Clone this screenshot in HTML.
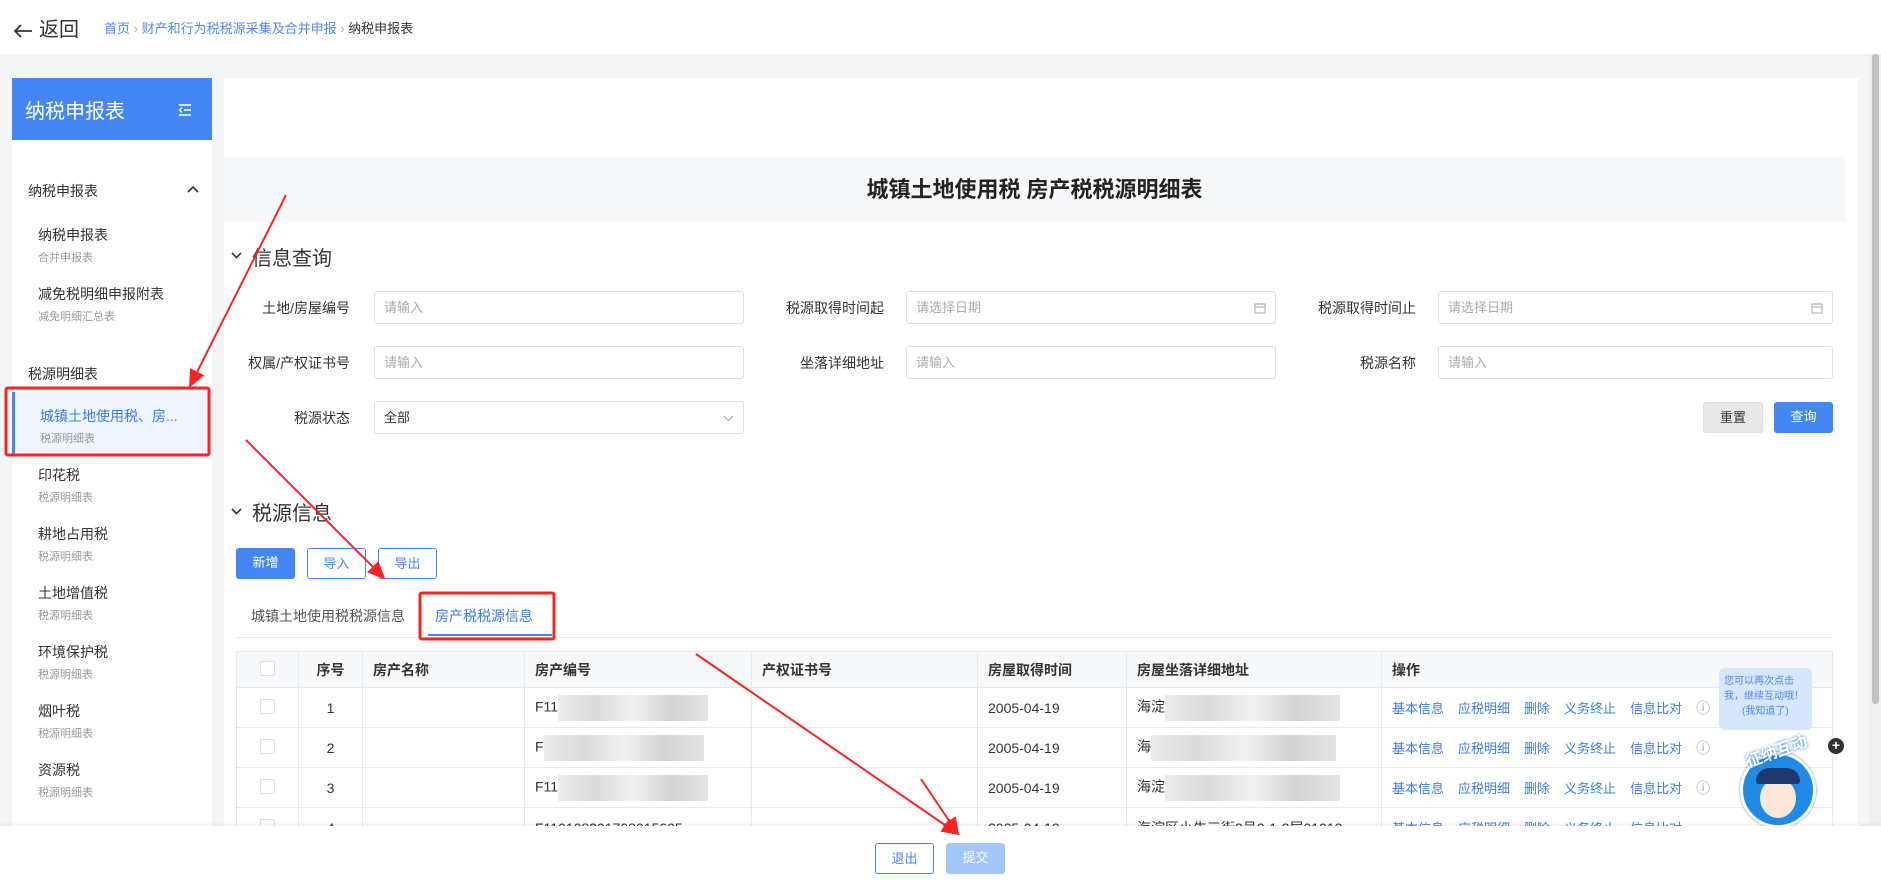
<!DOCTYPE html>
<html><head><meta charset="utf-8"><style>
*{margin:0;padding:0;box-sizing:border-box}
body{width:1881px;height:885px;overflow:hidden;background:#f4f5f7;font-family:"Liberation Sans","Noto Sans CJK SC",sans-serif;color:#333;position:relative;font-size:14px}
.a{position:absolute;white-space:nowrap}
.top{left:0;top:0;width:1881px;height:54px;background:#fff}
.inp{position:absolute;height:33px;border:1px solid #dcdfe6;border-radius:3px;background:#fff;color:#aaa;font-size:13px;padding:0 9px;line-height:31px}
.inp svg{float:right;margin-top:10px}
.lbl{position:absolute;text-align:right;font-size:14px;color:#333;width:150px}
.btn{position:absolute;height:31px;border-radius:3px;font-size:13px;text-align:center;line-height:29px}
.side .t{position:absolute;left:37px;font-size:14px;color:#333}
.side .s{position:absolute;left:37px;font-size:11px;color:#999}
table{border-collapse:collapse;position:absolute;left:236px;top:651px;width:1597px;font-size:14px}
td,th{border:1px solid #e6e8eb;height:40px;padding:0 10px;text-align:left;font-weight:bold;color:#333}
th{height:36px;background:#f7f8fa}
td{font-weight:normal}
.cb{display:inline-block;width:15px;height:15px;border:1px solid #dcdfe6;border-radius:2px;background:#fff}
.op{color:#3a7bea;font-size:13px;margin-right:14px}
.blur{display:inline-block;width:150px;height:26px;background:linear-gradient(90deg,#e6e6e6,#d0d0d0,#eee,#c8c8c8,#ddd);vertical-align:middle;opacity:.8}
</style></head><body>
<div class="a top"></div>
<div class="a" style="left:13px;top:13px;font-size:20px;color:#333"><svg width="20" height="14" viewBox="0 0 20 14" style="vertical-align:middle;margin-right:6px"><path d="M19 7H2M8 1L2 7l6 6" stroke="#333" stroke-width="1.8" fill="none"/></svg>返回</div>
<div class="a" style="left:104px;top:18px;font-size:13px;color:#4a8af4">首页 <span style="color:#aaa">›</span> 财产和行为税税源采集及合并申报 <span style="color:#aaa">›</span> <span style="color:#333">纳税申报表</span></div>

<div class="a side" style="left:12px;top:78px;width:200px;height:760px;background:#fff">
 <div class="a" style="left:0;top:0;width:200px;height:62px;background:#4486f4;color:#fff;font-size:20px;padding:17px 13px">纳税申报表<svg width="14" height="12" viewBox="0 0 14 12" style="position:absolute;right:20px;top:26px"><path d="M1 1h12M6 6h7M1 11h12M4 3.5L1.5 6 4 8.5" stroke="#fff" stroke-width="1.5" fill="none"/></svg></div>
 <div class="a" style="left:16px;top:103px;font-size:14px">纳税申报表</div>
 <svg class="a" style="left:175px;top:107px" width="12" height="8" viewBox="0 0 12 8"><path d="M1 7l5-5 5 5" stroke="#333" stroke-width="1.6" fill="none"/></svg>
 <div class="t" style="left:26px;top:147px">纳税申报表</div><div class="s" style="left:26px;top:171px">合并申报表</div>
 <div class="t" style="left:26px;top:206px">减免税明细申报附表</div><div class="s" style="left:26px;top:230px">减免明细汇总表</div>
 <div class="a" style="left:16px;top:286px;font-size:14px">税源明细表</div>
 <div class="a" style="left:0;top:314px;width:200px;height:63px;background:#eef5ff;border-left:3px solid #4486f4"></div>
 <div class="t" style="left:28px;top:328px;color:#3a7bea">城镇土地使用税、房...</div><div class="s" style="left:28px;top:352px">税源明细表</div>
 <div class="t" style="left:26px;top:387px">印花税</div><div class="s" style="left:26px;top:411px">税源明细表</div>
 <div class="t" style="left:26px;top:446px">耕地占用税</div><div class="s" style="left:26px;top:470px">税源明细表</div>
 <div class="t" style="left:26px;top:505px">土地增值税</div><div class="s" style="left:26px;top:529px">税源明细表</div>
 <div class="t" style="left:26px;top:564px">环境保护税</div><div class="s" style="left:26px;top:588px">税源明细表</div>
 <div class="t" style="left:26px;top:623px">烟叶税</div><div class="s" style="left:26px;top:647px">税源明细表</div>
 <div class="t" style="left:26px;top:682px">资源税</div><div class="s" style="left:26px;top:706px">税源明细表</div>
</div>

<div class="a" style="left:224px;top:78px;width:1634px;height:760px;background:#fff"></div>
<div class="a" style="left:224px;top:157px;width:1621px;height:65px;background:#f7f8fa;text-align:center;font-size:22px;font-weight:bold;line-height:65px;color:#222">城镇土地使用税 房产税税源明细表</div>
<svg class="a" style="left:231px;top:252px" width="11" height="7" viewBox="0 0 11 7"><path d="M1 1l4.5 4.5L10 1" stroke="#333" stroke-width="1.6" fill="none"/></svg>
<div class="a" style="left:252px;top:242px;font-size:20px;color:#333">信息查询</div>

<div class="lbl" style="left:200px;top:298px">土地/房屋编号</div><div class="inp" style="left:374px;top:291px;width:370px">请输入</div>
<div class="lbl" style="left:734px;top:298px">税源取得时间起</div><div class="inp" style="left:906px;top:291px;width:370px">请选择日期<svg width="12" height="12" viewBox="0 0 12 12"><rect x="1" y="2" width="10" height="9" stroke="#aaa" fill="none"/><path d="M1 5h10M4 1v2M8 1v2" stroke="#aaa"/></svg></div>
<div class="lbl" style="left:1266px;top:298px">税源取得时间止</div><div class="inp" style="left:1438px;top:291px;width:395px">请选择日期<svg width="12" height="12" viewBox="0 0 12 12"><rect x="1" y="2" width="10" height="9" stroke="#aaa" fill="none"/><path d="M1 5h10M4 1v2M8 1v2" stroke="#aaa"/></svg></div>
<div class="lbl" style="left:200px;top:353px">权属/产权证书号</div><div class="inp" style="left:374px;top:346px;width:370px">请输入</div>
<div class="lbl" style="left:734px;top:353px">坐落详细地址</div><div class="inp" style="left:906px;top:346px;width:370px">请输入</div>
<div class="lbl" style="left:1266px;top:353px">税源名称</div><div class="inp" style="left:1438px;top:346px;width:395px">请输入</div>
<div class="lbl" style="left:200px;top:408px">税源状态</div><div class="inp" style="left:374px;top:401px;width:370px;color:#333">全部<svg width="11" height="7" viewBox="0 0 11 7" style="margin-top:13px"><path d="M1 1l4.5 4.5L10 1" stroke="#aaa" stroke-width="1.2" fill="none"/></svg></div>
<div class="btn" style="left:1703px;top:402px;width:60px;background:#e8e8e8;border:1px solid #ddd;color:#333">重置</div>
<div class="btn" style="left:1774px;top:402px;width:59px;background:#4486f4;color:#fff">查询</div>

<svg class="a" style="left:231px;top:508px" width="11" height="7" viewBox="0 0 11 7"><path d="M1 1l4.5 4.5L10 1" stroke="#333" stroke-width="1.6" fill="none"/></svg>
<div class="a" style="left:252px;top:497px;font-size:20px;color:#333">税源信息</div>
<div class="btn" style="left:236px;top:548px;width:59px;background:#4486f4;color:#fff">新增</div>
<div class="btn" style="left:307px;top:548px;width:59px;border:1px solid #4486f4;color:#4486f4;background:#fff">导入</div>
<div class="btn" style="left:378px;top:548px;width:59px;border:1px solid #4486f4;color:#4486f4;background:#fff">导出</div>
<div class="a" style="left:251px;top:606px;font-size:14px;color:#555">城镇土地使用税税源信息</div>
<div class="a" style="left:435px;top:606px;font-size:14px;color:#3a7bea">房产税税源信息</div>
<div class="a" style="left:428px;top:634px;width:124px;height:2px;background:#4486f4"></div>
<div class="a" style="left:236px;top:637px;width:1597px;height:1px;background:#e8e8e8"></div>

<table>
<tr><th style="width:62px;text-align:center"><span class="cb"></span></th><th style="width:64px;text-align:center">序号</th><th style="width:162px">房产名称</th><th style="width:227px">房产编号</th><th style="width:226px">产权证书号</th><th style="width:149px">房屋取得时间</th><th style="width:255px">房屋坐落详细地址</th><th>操作</th></tr>
<tr><td style="text-align:center"><span class="cb"></span></td><td style="text-align:center">1</td><td></td><td>F11<span class="blur"></span></td><td></td><td>2005-04-19</td><td>海淀<span class="blur" style="width:175px"></span></td><td><span class="op">基本信息</span><span class="op">应税明细</span><span class="op">删除</span><span class="op">义务终止</span><span class="op">信息比对</span><span style="color:#999">&#9432;</span></td></tr>
<tr><td style="text-align:center"><span class="cb"></span></td><td style="text-align:center">2</td><td></td><td>F<span class="blur" style="width:160px"></span></td><td></td><td>2005-04-19</td><td>海<span class="blur" style="width:185px"></span></td><td><span class="op">基本信息</span><span class="op">应税明细</span><span class="op">删除</span><span class="op">义务终止</span><span class="op">信息比对</span><span style="color:#999">&#9432;</span></td></tr>
<tr><td style="text-align:center"><span class="cb"></span></td><td style="text-align:center">3</td><td></td><td>F11<span class="blur"></span></td><td></td><td>2005-04-19</td><td>海淀<span class="blur" style="width:175px"></span></td><td><span class="op">基本信息</span><span class="op">应税明细</span><span class="op">删除</span><span class="op">义务终止</span><span class="op">信息比对</span><span style="color:#999">&#9432;</span></td></tr>
<tr><td style="text-align:center"><span class="cb"></span></td><td style="text-align:center">4</td><td></td><td>F110108201708015605</td><td></td><td>2005-04-19</td><td>海淀区小牛三街2号3-1-2层01013</td><td><span class="op">基本信息</span><span class="op">应税明细</span><span class="op">删除</span><span class="op">义务终止</span><span class="op">信息比对</span></td></tr>
</table>

<div class="a" style="left:1719px;top:668px;width:93px;height:62px;background:#d6e7fd;border-radius:5px;font-size:10px;color:#4a8af4;padding:6px 5px;line-height:15px;white-space:normal">您可以再次点击我，继续互动哦！<br><span style="margin-left:18px">(我知道了)</span></div>
<div class="a" style="left:1740px;top:752px;width:76px;height:76px;border-radius:50%;background:#1f8be6;border:3px solid #fff;box-shadow:0 0 2px #1f8be6"></div>
<div class="a" style="left:1760px;top:778px;width:36px;height:40px;border-radius:50%;background:#fbe6d8"></div>
<div class="a" style="left:1756px;top:768px;width:44px;height:16px;border-radius:20px 20px 4px 4px;background:#1e3a6e"></div>
<div class="a" style="left:1744px;top:738px;font-size:16px;font-weight:bold;color:#fff;text-shadow:0 0 3px #1f6fd0;transform:rotate(-20deg)">征纳互动</div>
<div class="a" style="left:1828px;top:738px;width:16px;height:16px;border-radius:50%;background:#333;color:#fff;font-size:14px;line-height:15px;text-align:center;font-weight:bold">+</div>

<div class="a" style="left:1869px;top:54px;width:12px;height:772px;background:#f0f0f0"></div>
<div class="a" style="left:1872px;top:54px;width:7px;height:650px;background:#c1c1c1;border-radius:3px"></div>

<div class="a" style="left:0;top:826px;width:1881px;height:59px;background:#fff;box-shadow:0 -2px 4px rgba(0,0,0,.06)"></div>
<div class="btn" style="left:875px;top:843px;width:59px;border:1px solid #4486f4;color:#4486f4;background:#fff">退出</div>
<div class="btn" style="left:946px;top:843px;width:59px;background:#a3c6fa;color:#fff">提交</div>

<svg class="a" style="left:0;top:0" width="1881" height="885">
<defs><marker id="m" markerWidth="10" markerHeight="10" refX="8" refY="5" orient="auto"><path d="M0,1 L9,5 L0,9 z" fill="#f22"/></marker></defs>
<rect x="6" y="388" width="203" height="67" fill="none" stroke="#f22" stroke-width="3" rx="2"/>
<rect x="420" y="593" width="134" height="46" fill="none" stroke="#f22" stroke-width="3" rx="2"/>
<g stroke="#f22" stroke-width="2" fill="none" marker-end="url(#m)">
<line x1="286" y1="195" x2="190" y2="386"/>
<line x1="246" y1="440" x2="384" y2="578"/>
<line x1="696" y1="654" x2="958" y2="834"/>
<line x1="921" y1="779" x2="958" y2="834"/>
</g>
</svg>
</body></html>
